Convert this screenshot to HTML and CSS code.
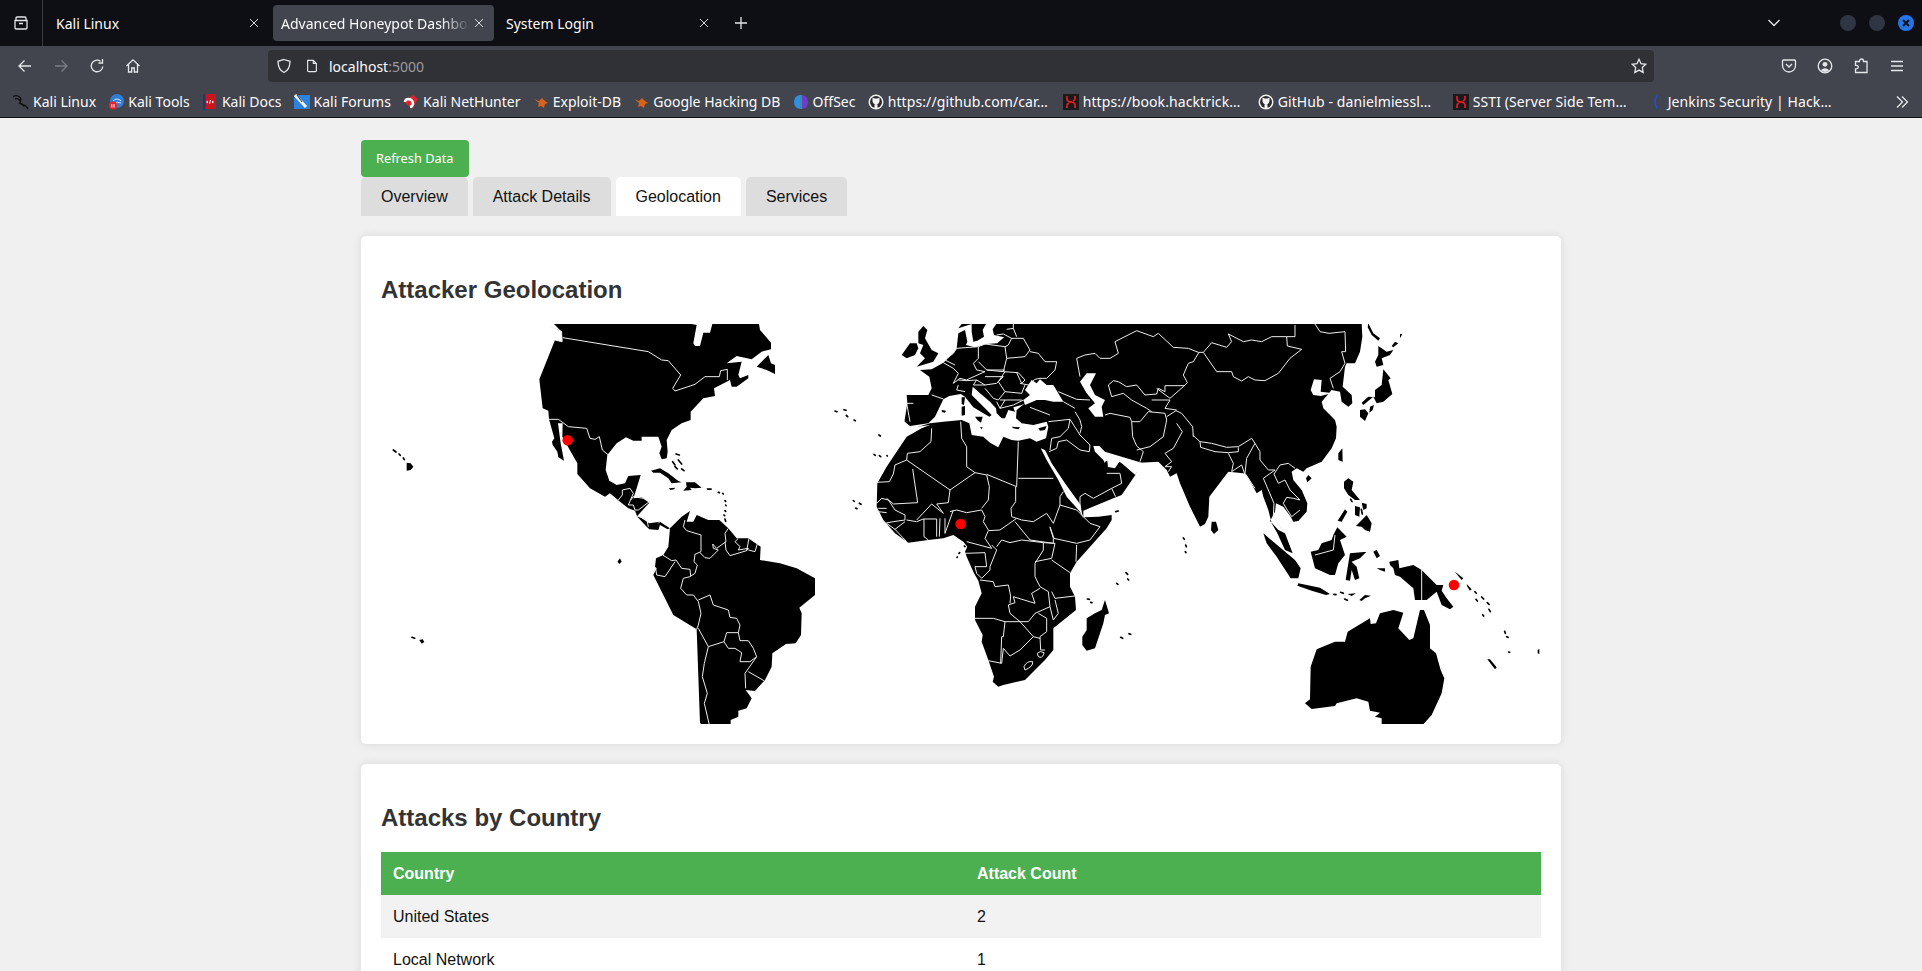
FILE: index.html
```html
<!DOCTYPE html>
<html lang="en">
<head>
    <meta charset="UTF-8">
    <title>Advanced Honeypot Dashboard</title>
    <link rel="stylesheet" href="styles.css">
</head>
<body>
    <!-- browser chrome -->
    <div class="tabbar">
        <div class="tablist-btn">
            <svg class="ico" viewBox="0 0 16 16"><path d="M3 5.5V3.2Q3 2 4.2 2h7.6Q13 2 13 3.2V5.5M2 5.5h12v7.3q0 1.2-1.2 1.2H3.2Q2 14 2 12.800zM6 8.500h4"/></svg>
        </div>
        <div class="tab">
            <span class="tab-title">Kali Linux</span>
            <svg class="tab-close" viewBox="0 0 10 10"><path d="M1 1l8 8M9 1l-8 8"/></svg>
        </div>
        <div class="tab active">
            <span class="tab-title">Advanced Honeypot Dashboard</span>
            <svg class="tab-close" viewBox="0 0 10 10"><path d="M1 1l8 8M9 1l-8 8"/></svg>
        </div>
        <div class="tab">
            <span class="tab-title">System Login</span>
            <svg class="tab-close" viewBox="0 0 10 10"><path d="M1 1l8 8M9 1l-8 8"/></svg>
        </div>
        <div class="newtab">
            <svg class="ico" viewBox="0 0 16 16"><path d="M8 2v12M2 8h12"/></svg>
        </div>
        <div class="tabbar-end">
            <svg class="chevron" viewBox="0 0 14 8"><path d="M1.500 1l5.500 5.500L12.500 1"/></svg>
            <div class="winbtns">
                <span class="winbtn"></span>
                <span class="winbtn"></span>
                <span class="winbtn close"><svg viewBox="0 0 16 16"><path d="M5 5l6 6M11 5l-6 6"/></svg></span>
            </div>
        </div>
    </div>

    <div class="toolbar">
        <div class="tool"><svg class="ico" viewBox="0 0 16 16"><path d="M14 8H2.500M7.500 2.500L2 8l5.500 5.500"/></svg></div>
        <div class="tool dim"><svg class="ico" viewBox="0 0 16 16"><path d="M2 8h11.500M8.500 2.500L14 8l-5.500 5.500"/></svg></div>
        <div class="tool"><svg class="ico" viewBox="0 0 16 16"><path d="M13.800 8.500A5.800 5.800 0 1 1 11.500 3.300M13.500 1v4h-4"/></svg></div>
        <div class="tool"><svg class="ico" viewBox="0 0 16 16"><path d="M1.500 8L8 1.800 14.500 8M3.500 6.500v7.500h3.200v-4h2.600v4h3.200V6.500"/></svg></div>
        <div class="urlbar">
            <svg class="ico shield" viewBox="0 0 16 16"><path d="M8 1.500l6 1.800c0 5-1.500 9.200-6 11.200-4.500-2-6-6.200-6-11.200z"/></svg>
            <svg class="ico page" viewBox="0 0 16 16"><path d="M3 1.500h6.500l3.500 3.500v8q0 1.500-1.500 1.500h-7Q3 14.500 3 13zM9.500 1.500V5H13"/></svg>
            <span class="url">localhost<span class="url-port">:5000</span></span>
            <svg class="ico star" viewBox="0 0 16 16"><path d="M8 1.300l2 4.400 4.800.6-3.500 3.300.9 4.800L8 12.100l-4.200 2.300.9-4.800L1.200 6.300l4.800-.6z"/></svg>
        </div>
        <div class="tool"><svg class="ico" viewBox="0 0 16 16"><path d="M2.500 2h11q1 0 1 1v4.500a6.500 6.500 0 0 1-13 0V3q0-1 1-1zM5 6l3 3 3-3"/></svg></div>
        <div class="tool"><svg class="ico" viewBox="0 0 16 16"><circle cx="8" cy="8" r="6.800"/><circle class="solid" cx="8" cy="6.300" r="2.400"/><path class="solid" d="M3.800 12.300q4.200-4.200 8.400 0-4.200 3.600-8.400 0z"/></svg></div>
        <div class="tool"><svg class="ico" viewBox="0 0 16 16"><path d="M6.500 3.500V3a2 2 0 0 1 4 0v.5H14V14.500H2.500v-3.700h1a1.700 1.700 0 0 0 0-3.500h-1V3.500z"/></svg></div>
        <div class="tool"><svg class="ico" viewBox="0 0 16 16"><path d="M2 3.500h12M2 8h12M2 12.500h12"/></svg></div>
    </div>

    <div class="bookmarks">
        <a class="bm"><svg class="fav" viewBox="0 0 16 16"><path class="fav-kali" d="M0 2.500c3-1.500 6-.5 7.500 1.500 1.500 2.500-2 4.500 1 6 2 1 5 1 6.500 5M2 5c3-1 4.500.5 5 2M6 8.500c2 2 4 1.500 5 4"/></svg>Kali Linux</a>
        <a class="bm"><svg class="fav" viewBox="0 0 16 16"><circle cx="9" cy="7" r="7" fill="#2f7fd8"/><path d="M5 7q4-4 8 0M6 10q3-3 7-1" fill="none" stroke="#cfe3f7"/><circle cx="5" cy="11.500" r="4" fill="#e0262c"/><path d="M3.800 10v3.500M6 10v3.500" stroke="#fff"/></svg>Kali Tools</a>
        <a class="bm"><svg class="fav" viewBox="0 0 16 16"><rect x="1" y="0" width="13" height="15" fill="#c9161c"/><rect x="1" y="0" width="2.500" height="16" fill="#1d3a78"/><path d="M6 7l-1.500 1L6 9M10 7l1.500 1L10 9M8.500 6l-1 4" stroke="#fff" fill="none"/></svg>Kali Docs</a>
        <a class="bm"><svg class="fav" viewBox="0 0 16 16"><rect x="0" y="1" width="16" height="14" fill="#2b82e0"/><path d="M1 1l11 12" stroke="#f2f2f2" stroke-width="3"/><path d="M3 1l5 7" stroke="#333"/></svg>Kali Forums</a>
        <a class="bm"><svg class="fav" viewBox="0 0 16 16"><path d="M1 8l9-7 5 4-6 10z" fill="#d7262c"/><path d="M2 8q0-3 4-3 4 1 4 5-1 3-3 3" fill="none" stroke="#fff" stroke-width="2.500"/></svg>Kali NetHunter</a>
        <a class="bm"><svg class="fav" viewBox="0 0 16 16"><path d="M1 5l5 2 3-3 3 3 3 2-3 1-1 4-3-2-3 1 1-4z" fill="#d8621c"/></svg>Exploit-DB</a>
        <a class="bm"><svg class="fav" viewBox="0 0 16 16"><path d="M1 5l5 2 3-3 3 3 3 2-3 1-1 4-3-2-3 1 1-4z" fill="#d8621c"/></svg>Google Hacking DB</a>
        <a class="bm"><svg class="fav" viewBox="0 0 16 16"><path d="M7 1Q1 2 1 8t6 7z" fill="#2f8fe0"/><path d="M9 1q6 1 6 7t-6 7z" fill="#6a3fd0"/><rect x="7.300" y="1" width="1.400" height="14" fill="#3ab0c8"/></svg>OffSec</a>
        <a class="bm bm-long"><svg class="fav" viewBox="0 0 16 16"><use href="#gh"/></svg>https://github.com/car…</a>
        <a class="bm bm-long"><svg class="fav" viewBox="0 0 16 16"><use href="#ht"/></svg>https://book.hacktrick…</a>
        <a class="bm bm-long"><svg class="fav" viewBox="0 0 16 16"><use href="#gh"/></svg>GitHub - danielmiessl…</a>
        <a class="bm bm-long"><svg class="fav" viewBox="0 0 16 16"><use href="#ht"/></svg>SSTI (Server Side Tem…</a>
        <a class="bm bm-long"><svg class="fav" viewBox="0 0 16 16"><path d="M9 1.500Q5 8 9 14.500" fill="none" stroke="#1c4fe0" stroke-width="1.600"/></svg>Jenkins Security | Hack…</a>
        <svg class="ico more" viewBox="0 0 16 16"><path d="M3 2.500L8.500 8 3 13.500M8 2.500L13.500 8 8 13.500"/></svg>
    </div>

    <svg class="defs" width="0" height="0">
        <defs>
            <g id="gh"><circle cx="8" cy="8" r="7.500" fill="#f2f2f2"/><circle cx="8" cy="8" r="6" fill="#2a2a2e"/><path d="M4.500 3.500l2 1h3l2-1v4q-1 3-3.500 3t-3.500-3zM6.500 10.500h3v4h-3z" fill="#f2f2f2"/></g>
            <g id="ht"><rect width="16" height="16" fill="#1a1a1e"/><path d="M4 2v3q0 2 3 3h2q3 1 3 3v3M12 2v3q0 1-2 2M4 14v-3q0-1 2-2" fill="none" stroke="#d91f1f" stroke-width="1.800"/></g>
        </defs>
    </svg>

    <!-- the page itself -->
    <div class="page-scroll">
        <div class="container">
            <button class="refresh-btn">Refresh Data</button>
            <div class="tabs">
                <button class="tab-btn">Overview</button>
                <button class="tab-btn">Attack Details</button>
                <button class="tab-btn current">Geolocation</button>
                <button class="tab-btn">Services</button>
            </div>

            <div class="card">
                <h2>Attacker Geolocation</h2>
                <svg class="worldmap" viewBox="381 324 1160 400">
                    <!-- americas -->
                    <g transform="translate(370 320) scale(.33333)">
                        <path class="land" d="M552 12L575 35 578 65 555 60 508 178 518 265 535 272 537 298 553 355 546 365 548 375 562 395 565 412 582 422 572 370 564 310 578 310 577 350 622 430 622 462 660 505 705 530 720 520 750 545 775 565 795 572 802 590 830 620 838 628 865 630 870 615 893 628 900 625 935 590 960 573 950 605 970 605 980 585 1015 600 1048 600 1075 625 1100 655 1135 655 1172 680 1170 720 1230 730 1280 745 1335 775 1335 825 1288 863 1295 880 1293 945 1277 970 1248 972 1207 1000 1205 1040 1185 1080 1155 1113 1127 1110 1145 1135 1130 1165 1105 1172 1105 1190 1082 1200 1082 1215 995 1215 990 1208 980 928 910 885 850 765 860 745 855 740 858 715 880 705 895 680 900 625 880 612 870 605 838 610 808 590 800 590 838 548 815 532 790 535 800 505 812 465 775 468 765 490 740 495 718 482 707 450 712 405 740 370 768 352 790 362 815 362 815 350 865 350 875 380 868 400 875 418 890 415 893 395 890 360 905 330 935 310 962 300 962 275 1000 235 1035 228 1032 205 1070 185 1080 180 1085 200 1100 200 1135 175 1135 165 1110 175 1105 165 1115 125 1070 130 1100 108 1145 118 1175 95 1203 88 1203 68 1170 30 1167 12 1027 12 1020 38 1000 38 990 78 975 78 970 70 980 15 965 12z"/>
                        <path class="land" d="M1160 140L1195 105 1203 130 1215 135 1215 162 1190 150zM843 452L870 445 895 460 925 483 935 487 905 490 895 475 870 458 850 458zM897 505L915 503 913 508 900 510zM948 487L975 487 995 503 975 505 960 503 965 510 940 512 950 500zM1010 505L1025 505 1025 510 1012 510zM110 428L122 430 130 440 122 450 110 452zM148 960L158 958 163 966 155 971zM742 725L750 715 755 725 748 732z"/>
                        <path class="isle" d="M918 402L928 405M925 420L935 432M908 425L915 435M915 440L922 447M935 447L942 452M1045 517L1048 518M1058 520L1060 522M1065 542L1067 544M1067 555L1068 557M1065 572L1067 574M1062 585L1064 587M1065 597L1067 604M70 390L78 396M87 402L91 406M100 414L103 419M126 952L134 955M1395 273L1401 275M1422 269L1428 271M1429 286L1433 290"/>
                        <path class="border" d="M578 53L835 95 875 120 895 122 932 165 908 205 915 213 975 193 1005 170 1048 170 1052 152 1072 148 1072 180M540 18L575 35 575 65 555 60M537 298L565 298 595 320 650 325 660 355 675 358 688 350 697 390 715 405M745 540L757 525 757 510 780 505 790 520 775 555 790 555 795 570M782 540L790 530 820 535 838 545 805 570 795 570M805 590L830 595 835 620M865 610L870 605"/>
                        <path class="border" d="M945 600L940 620 950 632 993 645 993 695 975 703 972 725 982 735 975 760 960 770 940 775 932 805 950 825 970 825 985 845 993 880 985 915 980 928M878 705L905 722 918 720 935 745 960 748 962 768M915 725L885 770 860 765 857 745M1075 625L1065 640 1068 665 1040 685 1028 672 1030 685 1045 690 1020 715 1005 713 990 698M1065 665L1068 690 1080 707 1130 692 1135 685 1105 690 1110 680 1095 665 1105 655M1130 692L1137 655M1135 690L1155 695 1163 668M985 840L1020 825 1030 855 1075 870 1080 892 1100 895 1110 915 1105 938 1070 938 1062 965 1015 980 985 925M1062 965L1075 985 1095 985 1115 998 1110 1025 1140 1025 1160 1010 1150 985 1135 962 1110 962 1105 938M1015 980L1003 1030 997 1070 1012 1120 1003 1150 1018 1215M1160 1010L1125 1060 1127 1105M1135 1055L1182 1082"/>
                    </g>
                    <!-- africa and eurasia -->
                    <g transform="translate(850 320) scale(.33333)">
                        <path class="land" d="M164 300L172 250 170 225 235 225 245 205 238 170 210 150 245 148 280 128 310 100 320 85 325 40 345 30 352 65 348 75 375 82 410 72 442 70 462 52 432 45 428 28 440 10 1535 10 1537 50 1530 95 1515 130 1490 130 1485 140 1478 200 1505 225 1507 250 1495 260 1475 245 1470 215 1445 210 1438 218 1412 215 1415 180 1392 178 1382 210 1390 225 1412 228 1435 222 1415 245 1420 265 1455 300 1460 320 1458 355 1445 385 1415 425 1370 445 1360 455 1340 445 1325 455 1330 480 1355 510 1372 550 1370 575 1345 603 1330 605 1322 590 1300 560 1278 550 1275 575 1260 603 1285 630 1305 640 1328 700 1305 690 1282 640 1265 610 1255 570 1240 530 1235 510 1220 520 1190 465 1180 460 1135 455 1078 530 1075 590 1065 612 1050 620 1020 560 990 490 980 460 960 470 950 450 925 425 870 428 856 465 815 525 790 535 700 572 700 592 745 590 785 585 785 600 770 625 680 725 660 760 660 800 675 830 678 870 610 925 610 990 585 1020 525 1080 460 1095 445 1100 428 1085 432 1070 415 1020 395 965 398 945 375 900 375 860 395 820 385 782 372 760 350 710 345 695 352 680 340 665 310 645 280 655 235 660 175 668 135 640 100 600 80 560 82 490 110 440 130 410 170 350 215 325 240 315 190 322 180 318 164 305z"/>
                        <!-- seas cut out of the land -->
                        <path class="sea" d="M180 318L235 310 255 290 280 238 298 228 332 222 345 230 370 262 400 280 418 290 425 285 402 262 365 225 368 200 385 215 420 245 438 265 440 280 455 295 465 295 475 270 495 275 490 262 515 255 525 250 500 270 498 295 515 310 550 315 590 305 595 320 588 355 560 365 540 355 505 362 485 360 460 350 445 382 420 368 400 350 365 345 358 310 335 300 280 305 240 310 190 325zM525 210L545 180 560 190 570 178 590 195 610 195 625 220 640 245 610 245 585 240 560 240 525 255 520 240 540 225zM690 185L710 160 738 160 720 195 735 225 765 240 755 260 760 290 735 290 715 265 735 250 710 220zM572 385L585 390 605 430 645 490 692 555 695 575 700 595 690 575 650 530 625 480 590 420zM730 378L748 378 765 395 815 410 875 428 856 465 818 432 808 425 795 445 770 440 760 420 735 395z"/>
                        <path class="land" d="M365 12L335 12 325 25zM365 12L408 12 398 30 402 50 382 62 370 65 365 35zM205 35L220 18 232 30 225 55 245 90 265 100 250 125 200 140 225 115 210 100 220 75 205 70zM155 105L180 70 200 70 205 85 195 105 170 115zM335 232L345 232 342 255 335 252zM335 260L345 258 345 285 335 287zM375 290L398 290 393 308 382 300zM275 270L288 272 285 278 276 276zM485 320L510 322 505 328 490 325zM565 325L590 318 585 330 570 332zM390 322L398 322 395 328zM765 840L777 880 765 885 760 910 735 985 710 992 697 975 697 950 710 930 710 895 735 880 755 870zM1085 605L1098 605 1105 630 1092 642 1083 630zM1240 640L1335 720 1352 745 1345 775 1322 775 1280 710 1250 670zM1345 790L1410 803 1440 822 1428 825 1385 812 1342 797zM1450 645L1462 622 1490 650 1470 660 1485 705 1465 730 1455 765 1440 765 1395 745 1382 695 1405 690 1415 670 1445 660zM1463 602L1485 568 1492 575 1475 605zM1368 475L1375 465 1385 475 1372 487zM1477 385L1478 425 1465 420 1465 400zM765 425L772 422 774 440 765 442z"/>
                        <path class="isle" d="M12 300L16 302M87 345L91 348M72 403L76 406M88 407L92 410M111 407L112 408M10 542L13 544M28 550L33 553M17 564L21 566M1000 654L1003 658M1007 675L1009 680M1006 695L1008 698M828 758L833 763M833 777L836 780M800 790L804 793M712 837L718 838M722 847L726 848M812 952L818 955M837 941L842 943M797 575L805 573M343 678L345 680M327 700L329 698M321 712L322 711"/>
                        <path class="border" d="M245 325L243 365 210 395 172 400 170 420 135 435 130 462 118 485 80 487M170 420L300 510 375 458 350 440 350 380 335 355 332 305M188 447L203 548 130 552 110 535M300 510L295 548 260 552 280 580 245 552 200 600M300 575L320 570 350 578 395 570 405 590 400 605 415 630M375 458L410 465 418 500 415 540 395 565M410 463L500 500 505 365M505 475L610 475M497 500L497 545 483 565 485 590 500 595 450 630 415 632 405 655 425 685 350 665M500 595L515 600 550 605 590 580 610 610 630 555 630 530 640 515M630 555L680 570 700 590 720 610 750 620M600 620L612 655 680 670 720 660 750 620M495 605L540 660 610 670 610 655 600 622M440 680L455 660 480 668 515 660 580 668 580 690 555 730 555 770 570 800 595 815 600 860 555 880 535 905 510 905 465 905 430 895 375 895M580 668L615 670 605 715 555 725M605 720L660 758M680 675L678 725M570 805L545 820 555 850 490 830 495 848 475 855 480 880 510 905M390 780L430 785 435 800 475 795 482 828 480 850M345 700L405 698 410 740 375 740 380 760 395 775 420 750 420 740 440 690 425 675M605 815L615 835 675 828M600 860L610 900 625 880 615 840M565 880L590 895 590 935 570 950 572 990 585 990M510 905L550 950 570 955M550 950L510 990 480 1008 460 985 455 1030 415 1022M465 905L460 950 455 950 452 1030M522 1040Q530 1022 548 1025 550 1040 525 1050zM562 1000Q570 990 582 998 580 1012 570 1012 562 1010 562 1000zM80 550L95 535 115 540 135 570 165 585 165 600 130 605 105 610 95 600M170 600L200 605 220 597 260 597 260 650M222 597L222 650 235 660M270 595L268 650M285 595L285 640 310 570M135 628L170 665M110 610L135 628 165 605M85 565L110 565M85 575L110 578"/>
                        <path class="border" d="M595 305L660 298 655 325 630 350 605 355 600 390M660 298L690 345 720 375 718 395 690 390 650 360 625 365 620 385 597 395M675 275L690 300 695 320 690 340M845 305L848 350 860 378 880 395 870 425M845 305L870 305 895 275 945 280 950 300 940 350 900 380 860 390M950 290L978 272 995 280 1028 320 1030 350M980 310L997 335 970 385 945 400 965 425 945 440 965 440 955 455M765 285L780 280 840 292 845 305M690 170L680 115 705 105 735 100 750 115 780 115 805 100 795 65 860 32 910 50 925 40 970 82 1015 85 1045 97 1060 97M1047 97L1030 125 1015 130 1000 165 1012 188 1000 200 960 235 920 205M775 195L790 182 805 185 830 200 860 195 885 225 920 222 925 205 945 215 945 197 1005 197M775 195L785 230 820 220 845 240 890 265 905 275M905 240L960 240 945 265 980 270M1060 97L1085 68 1130 82 1145 65 1135 42 1180 65 1205 60 1235 65 1265 50 1310 50 1335 50 1335 15M1310 50L1312 78 1355 88 1320 115 1285 160 1245 182 1215 180 1195 170 1175 183 1150 170 1145 155 1100 155 1060 97M1395 12L1410 35 1437 40 1485 35 1487 95 1475 95 1485 130 1470 155 1440 175 1450 205M1028 345L1050 365 1085 370 1130 382 1165 380 1205 355 1215 370 1230 395 1230 420 1255 450 1275 450M1050 365L1052 382 1095 395 1135 398 1165 395 1165 382M1135 400L1150 430 1145 455 1175 435 1185 465M1215 370L1190 415 1185 460 1215 505M1275 450L1240 475 1255 510 1272 550 1270 590 1305 640M1272 462L1290 435 1315 430 1335 445M1272 462L1285 490 1305 480 1320 510 1350 540 1330 535 1310 532 1300 550 1312 570 1325 590 1350 570M690 565L690 530 705 520 730 535 785 505 797 530M785 505L815 490 810 460 770 460M245 225L280 237M190 250L170 250 180 305M280 128L310 145 325 160 310 190 330 175 350 180 360 175M325 195L320 210 345 215M285 120L315 135M290 115L310 100 320 85 385 80 385 115 370 130 380 150 405 155 360 175M385 80L405 72 465 80 470 115 460 155 410 150 385 125M465 80L475 75 485 55 520 55 540 90 525 110 470 115M485 55L460 42 440 45M490 25L500 50M490 12L490 25 470 28M540 95L565 100 585 125 620 125 615 150 590 175 570 175 555 178 535 195 510 190M460 155L505 158 525 180 515 190 500 158M465 155L445 185 465 215 515 220 525 195M410 150L465 150M405 170L460 170 440 190 405 195 380 180M325 180L350 182 380 180 370 195 405 195M405 205L430 235 445 240 465 215M450 240L515 240M440 245L450 265 465 240M450 265L490 255 520 240M625 215L680 238 720 240M640 245L675 265M540 262L600 285"/>
                    </g>
                    <!-- pacific side -->
                    <g transform="translate(1200 320) scale(.33333)">
                        <path class="land" d="M505 10L520 40 540 55 535 62 515 45 503 22zM600 42L607 42 600 55zM585 65L595 70 580 82 575 78zM535 78L560 95 580 90 570 105 545 115 550 135 530 140 525 125 535 105zM550 148L572 175 565 180 577 222 550 245 530 250 520 230 490 255 485 248 505 230 525 232 525 210 545 195zM510 260L522 255 518 270 508 278zM480 270L495 268 505 280 495 303 480 290zM432 485L445 475 460 485 455 510 480 540 465 540 445 525 432 505zM465 558L480 562 478 590 465 585zM485 548L500 552 500 565 490 570zM468 618L500 585 515 610 510 635 495 630 485 620zM450 700L500 695 505 690 480 715 455 725 470 740 478 775 465 780 455 750 450 782 437 780 445 730zM520 695L530 690 540 708 530 715zM530 745L555 745 555 755 540 750zM568 725L595 720 598 745 640 735 665 750 710 795 730 795 725 812 740 835 760 860 750 868 725 855 710 815 680 840 645 840 640 805 600 770 585 765 580 745 570 735zM443 822L468 820 455 828zM478 840L495 825 513 827 495 835 485 843zM765 755L790 775 785 780 768 760zM800 792L815 808 810 812 802 800zM862 1018L870 1018 890 1042 885 1048zM1013 990L1018 987 1018 1002 1013 1000zM332 1040L350 988 405 965 435 965 443 935 510 895 512 912 528 910 540 880 580 870 610 878 595 925 628 960 640 955 660 870 672 870 690 915 690 985 708 1000 722 1050 733 1075 725 1120 695 1185 668 1215 545 1215 545 1195 525 1190 540 1178 510 1172 505 1145 470 1135 410 1150 405 1158 335 1167 315 1150 330 1138z"/>
                        <path class="isle" d="M452 538L456 545M402 823L408 824M422 817L430 820M434 837L442 841M484 568L487 582M825 815L829 820M828 838L832 843M845 831L851 837M862 848L867 853M848 884L851 888M867 868L871 875M914 934L916 940M920 950L924 952M926 996L929 997"/>
                        <path class="border" d="M345 705L400 690 405 645M665 750L665 840"/>
                    </g>
                    <circle class="marker" cx="567.700" cy="440.300" r="5.300"/>
                    <circle class="marker" cx="960.700" cy="524" r="5.300"/>
                    <circle class="marker" cx="1454" cy="585" r="5.300"/>
                </svg>
            </div>

            <div class="card">
                <h2>Attacks by Country</h2>
                <table>
                    <thead>
                        <tr><th>Country</th><th>Attack Count</th></tr>
                    </thead>
                    <tbody>
                        <tr><td>United States</td><td>2</td></tr>
                        <tr><td>Local Network</td><td>1</td></tr>
                    </tbody>
                </table>
            </div>
        </div>
    </div>
</body>
</html>
```

FILE: styles.css
```css
/* Reset */
html, body {
    margin: 0;
    padding: 0;
    height: 100%;
    overflow: hidden;
}

body {
    font-family: "Liberation Sans", Arial, sans-serif;
    background-color: #f0f0f0;
    color: #333;
    display: flex;
    flex-direction: column;
}

/* Browser tab strip */
.tabbar {
    height: 46px;
    flex: none;
    display: flex;
    align-items: center;
    background-color: #0d0f14;
    color: #fbfbfe;
    font-family: "Noto Sans", sans-serif;
    font-size: 14px;
}

.ico {
    width: 16px;
    height: 16px;
    fill: none;
    stroke: #e6e7ea;
    stroke-width: 1.3;
}

.tablist-btn {
    width: 43px;
    height: 46px;
    display: flex;
    align-items: center;
    justify-content: center;
    border-right: 1px solid #3a3c42;
    box-sizing: border-box;
    margin-right: 5px;
}

.tab {
    width: 221px;
    height: 36px;
    margin-right: 4px;
    padding: 0 8px;
    box-sizing: border-box;
    display: flex;
    align-items: center;
    border-radius: 4px;
}

.tab.active {
    background-color: #42454e;
}

.tab-title {
    flex: 1;
    overflow: hidden;
    white-space: nowrap;
}

.tab.active .tab-title {
    -webkit-mask-image: linear-gradient(to right, #000 85%, transparent 100%);
    mask-image: linear-gradient(to right, #000 85%, transparent 100%);
}

.tab-close {
    width: 10px;
    height: 10px;
    margin-left: 4px;
    margin-right: 2px;
    fill: none;
    stroke: #d8d9dc;
    stroke-width: 1;
}

.newtab {
    width: 36px;
    display: flex;
    justify-content: center;
}

.tabbar-end {
    flex: 1;
    display: flex;
    align-items: center;
    justify-content: flex-end;
}

.chevron {
    width: 14px;
    height: 8px;
    fill: none;
    stroke: #e6e7ea;
    stroke-width: 1.3;
    margin-right: 59px;
}

.winbtns {
    display: flex;
    gap: 13px;
    margin-right: 8px;
}

.winbtn {
    width: 16px;
    height: 16px;
    border-radius: 50%;
    background-color: #2f3542;
}

.winbtn.close {
    background-color: #2776e8;
}

.winbtn svg {
    display: block;
    fill: none;
    stroke: #10131a;
    stroke-width: 2;
}

/* Navigation toolbar */
.toolbar {
    height: 36px;
    flex: none;
    display: flex;
    align-items: flex-end;
    padding: 0 7px;
    background-color: #42454e;
}

.tool {
    width: 36px;
    height: 32px;
    display: flex;
    align-items: center;
    justify-content: center;
}

.tool.dim .ico {
    stroke: #7b7e85;
}

.solid {
    fill: #e6e7ea;
    stroke: none;
}

.urlbar {
    flex: 1;
    height: 32px;
    margin: 0 117px;
    padding: 0 7px 0 8px;
    display: flex;
    align-items: center;
    background-color: #303136;
    border-radius: 4px;
    color: #fbfbfe;
    font-family: "Noto Sans", sans-serif;
    font-size: 14px;
}

.page {
    margin-left: 13px;
    width: 14px;
}

.url {
    margin-left: 10px;
    flex: 1;
}

.url-port {
    color: #9a9ca1;
}

/* Bookmarks toolbar */
.bookmarks {
    height: 36px;
    flex: none;
    box-sizing: border-box;
    display: flex;
    align-items: center;
    padding: 4px 0 0 13px;
    background-color: #42454e;
    border-bottom: 1px solid #0d0f14;
    color: #fbfbfe;
    font-family: "Noto Sans", sans-serif;
    font-size: 14px;
    white-space: nowrap;
}

.bm {
    display: flex;
    align-items: center;
    gap: 4px;
    margin-right: 12.2px;
}

.bm-long {
    width: 195px;
    margin-right: 0;
    letter-spacing: 0.1px;
}

.fav {
    width: 16px;
    height: 16px;
    flex: none;
}

.fav-kali {
    fill: none;
    stroke: #111;
    stroke-width: 1.400;
}

.more {
    margin-left: auto;
    margin-right: 12px;
}

.defs {
    position: absolute;
}

/* Dashboard page */
.page-scroll {
    flex: 1;
    overflow: hidden;
}

.container {
    width: 1200px;
    margin: 0 auto;
    padding-top: 22px;
}

.refresh-btn {
    display: block;
    background-color: #4caf50;
    color: #fff;
    border: none;
    padding: 10px 15px;
    border-radius: 4px;
    font-family: "Noto Sans", sans-serif;
    font-size: 12.8px;
    line-height: 17px;
}

.tabs {
    display: flex;
    gap: 5px;
    margin-bottom: 20px;
}

.tab-btn {
    background-color: #ddd;
    color: #111;
    border: none;
    padding: 10px 20px;
    border-radius: 5px 5px 0 0;
    font-family: "Liberation Sans", Arial, sans-serif;
    font-size: 16px;
    line-height: 19px;
}

.tab-btn.current {
    background-color: #fff;
}

.card {
    background-color: #fff;
    padding: 20px;
    margin-bottom: 20px;
    border-radius: 5px;
    box-shadow: 0 0 10px rgba(0, 0, 0, 0.1);
}

.card h2 {
    margin: 20px 0;
    font-size: 24px;
    line-height: 28px;
    color: #333;
}

.worldmap {
    display: block;
    width: 1160px;
    height: 400px;
}

.land {
    fill: #000;
}

.sea {
    fill: #fff;
}

.isle {
    fill: none;
    stroke: #000;
    stroke-width: 5;
    stroke-linecap: round;
}

.border {
    fill: none;
    stroke: #eee;
    stroke-width: 3;
    stroke-linejoin: round;
}

.marker {
    fill: #f00;
}

/* Table */
table {
    width: 100%;
    border-collapse: collapse;
    font-size: 16px;
}

th, td {
    padding: 13px 12px 11px;
    line-height: 18px;
    text-align: left;
    border-bottom: 1px solid #f0f0f0;
    color: #111;
}

th {
    background-color: #4caf50;
    color: #fff;
    border-bottom-color: #4caf50;
}

th:first-child {
    width: 560px;
}

tbody tr:nth-child(odd) {
    background-color: #f2f2f2;
}
```
